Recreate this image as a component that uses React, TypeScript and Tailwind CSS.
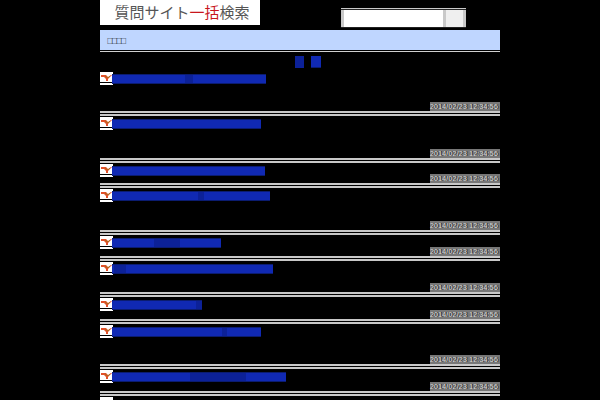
const items = [
  { title: "w-[154px]", gap: "h-[22px]", blot: "ml-[73px] w-[8px]" },
  { title: "w-[149px]", gap: "h-[24px]", blot: "" },
  { title: "w-[153px]", gap: "h-[2px]", blot: "" },
  { title: "w-[158px]", gap: "h-[24px]", blot: "ml-[86px] w-[6px]" },
  { title: "w-[109px]", gap: "h-[3px]", blot: "ml-[42px] w-[26px]" },
  { title: "w-[161px]", gap: "h-[13px]", blot: "ml-[2px] w-[12px]" },
  { title: "w-[90px]", gap: "h-[4px]", blot: "ml-[84px] w-[6px]" },
  { title: "w-[149px]", gap: "h-[22px]", blot: "ml-[110px] w-[5px]" },
  { title: "w-[174px]", gap: "h-[4px]", blot: "ml-[78px] w-[56px]" },
];

function YahooMark() {
  return (
    <div className="w-[13px] h-[13px] shrink-0 bg-white flex flex-col">
      <svg viewBox="0 0 13 10" className="w-[13px] h-[10px]">
        <path d="M1 3h5l2 2 3-2h1L8 7v2H6V7L4 5H1z" fill="#e2502a" />
        <path d="M5 4l3 2 2-2" fill="none" stroke="#a8701f" strokeWidth="1" />
      </svg>
      <div className="h-px bg-black" />
    </div>
  );
}

function Lines() {
  return (
    <div className="h-[5px] flex flex-col justify-between">
      <div className="h-[2px] bg-[#c8c8c8]" />
      <div className="h-[2px] bg-[#c8c8c8]" />
    </div>
  );
}

function Row({ title, gap, blot }: { title: string; gap: string; blot: string }) {
  return (
    <div className="flex flex-col">
      <div className="h-[8px] flex items-start">
        <YahooMark />
        <div className={`${title} -ml-px mt-[2px] h-[10px] shrink-0 bg-[#1029b3] border-y border-[#0b1c70]`}>
          {blot && <div className={`${blot} h-[8px] bg-[#0c2198]`} />}
        </div>
      </div>
      <div className={gap} />
      <div className="flex justify-end">
        <div className="w-[70px] h-[9px] bg-[#777777] text-[7px] leading-[9px] tracking-[0.2px] text-[#dddddd] [text-shadow:1px_0_#222222] whitespace-nowrap font-['Liberation_Sans',sans-serif]">
          2014/02/23 12:34:56
        </div>
      </div>
      <Lines />
      <div className="h-px" />
    </div>
  );
}

export default function App() {
  return (
    <div className="w-[600px] h-[400px] overflow-hidden bg-black font-['Noto_Sans_CJK_JP',sans-serif]">
      <div className="w-[400px] mx-auto">
        <div className="h-[28px] flex items-start">
          <div className="w-[160px] h-[25px] bg-white flex items-center justify-center pl-[4px] text-[15px] text-[#555]">
            <span>質問サイト</span>
            <span className="text-[#c8161d]">一括</span>
            <span>検索</span>
          </div>
          <div className="ml-[81px] mt-[8px] w-[125px] h-[20px] shrink-0 bg-[#c9c9c9] flex flex-col">
            <div className="h-px bg-[#c9c9c9]" />
            <div className="h-px bg-[#222]" />
            <div className="flex-1 flex items-stretch gap-[3px] px-[3px]">
              <div className="w-[99px] bg-white" />
              <div className="flex-1 bg-[#efefef]" />
            </div>
            <div className="h-px bg-[#222]" />
          </div>
        </div>
        <div className="h-[2px] bg-black" />
        <div className="h-[21px] bg-[#bfd6ff] flex items-center pl-[7px] text-[6px] tracking-[-1.5px] font-bold text-black border-b border-black">
          □□□□
        </div>
        <div className="h-px bg-[#d0d0d0]" />
        <div className="h-[20px] flex items-start gap-[7px] pt-[4px] pl-[195px]">
          <div className="w-[9px] h-[12px] bg-[#0c2198]" />
          <div className="w-[10px] h-[12px] bg-[#1029b3] border-b border-[#0b1c70]" />
        </div>
        {items.map((item, i) => (
          <Row key={i} title={item.title} gap={item.gap} blot={item.blot} />
        ))}
        <YahooMark />
      </div>
    </div>
  );
}
